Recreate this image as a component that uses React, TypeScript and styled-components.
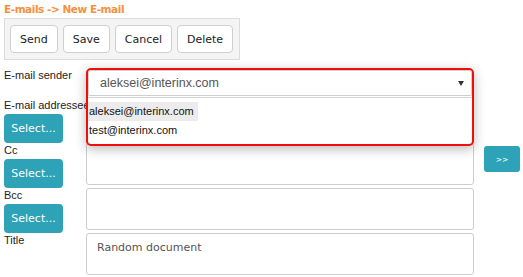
import React from "react";
import styled, { createGlobalStyle } from "styled-components";

const GlobalStyle = createGlobalStyle`
  html, body { margin: 0; padding: 0; background: #fff; }
  body { font-family: "Liberation Sans", Arial, sans-serif; }
  * { box-sizing: border-box; }
`;

const Page = styled.div`
  padding: 2px 4px 0 4px;
  width: 523px;
  height: 277px;
  overflow: hidden;
`;

const Breadcrumb = styled.div`
  font-family: "DejaVu Sans", Verdana, sans-serif;
  font-size: 10.5px;
  font-weight: bold;
  letter-spacing: -0.45px;
  line-height: 14px;
  color: #f4913f;
  margin-bottom: 2px;
  white-space: nowrap;
`;

const Toolbar = styled.div`
  display: inline-flex;
  gap: 5px;
  padding: 6px 6px 6px 5px;
  background: #f4f4f4;
  border: 1px solid #dcdcdc;
`;

const ToolButton = styled.button`
  height: 28px;
  padding: 0 9px;
  background: #fff;
  border: 1px solid #cfcfcf;
  border-radius: 4px;
  font-family: "DejaVu Sans", Verdana, sans-serif;
  font-size: 11px;
  color: #222;
  cursor: pointer;
`;

const Form = styled.div`
  margin-top: 8px;
  display: grid;
  grid-template-columns: 82px 388px 46px;
  grid-template-rows: 30px 45px 45px 45px 45px;
  align-items: start;
`;

const LabelCell = styled.div<{ $row: number }>`
  grid-column: 1;
  grid-row: ${(p) => p.$row};
  display: flex;
  flex-direction: column;
  align-items: flex-start;
`;

const Label = styled.label`
  font-size: 11px;
  line-height: 15px;
  color: #222;
  white-space: nowrap;
  margin-bottom: 1px;
`;

const SelectButton = styled.button`
  height: 29px;
  width: 59px;
  padding: 0;
  border: none;
  border-radius: 4px;
  background: #2ea2b6;
  color: #fff;
  font-family: "DejaVu Sans", Verdana, sans-serif;
  font-size: 11px;
  cursor: pointer;
`;

const FieldCell = styled.div<{ $row: number }>`
  grid-column: 2;
  grid-row: ${(p) => p.$row};
  position: relative;
`;

const TextBox = styled.textarea`
  display: block;
  width: 388px;
  height: 42px;
  margin: 0;
  padding: 7px 10px;
  border: 1px solid #cdcdcd;
  border-radius: 3px;
  resize: none;
  font-family: "DejaVu Sans", Verdana, sans-serif;
  font-size: 11px;
  line-height: 14px;
  color: #555;
  background: #fff;
  outline: none;
`;

const SelectSlot = styled.div`
  height: 30px;
`;

const FocusRing = styled.div`
  position: absolute;
  top: 0;
  left: 0;
  width: 388px;
  z-index: 5;
  border: 2px solid #f20d0d;
  border-radius: 5px;
  background: #fff;
  box-shadow: 0 3px 12px rgba(0, 0, 0, 0.28);
  overflow: hidden;
`;

const SelectHead = styled.div`
  height: 26px;
  display: flex;
  align-items: center;
  justify-content: space-between;
  padding: 0 7px 0 11px;
  border: 1px solid #cfcfcf;
  border-radius: 3px 3px 0 0;
  font-size: 12.5px;
  color: #555;
`;

const Caret = styled.span`
  width: 0;
  height: 0;
  border-left: 3.5px solid transparent;
  border-right: 3.5px solid transparent;
  border-top: 5px solid #333;
`;

const OptionList = styled.div`
  border-top: 1px solid #d4d4d4;
  margin-top: 1px;
  padding: 4px 0 4px;
`;

const Option = styled.div<{ $active?: boolean }>`
  width: fit-content;
  height: 19px;
  line-height: 19px;
  padding: 0 4px 0 1px;
  font-size: 11px;
  color: #111;
  background: ${(p) => (p.$active ? "#ececec" : "transparent")};
`;

const MoveButton = styled.button`
  grid-column: 3;
  grid-row: 3;
  justify-self: end;
  margin-top: 3px;
  width: 36px;
  height: 26px;
  padding: 0;
  border: none;
  border-radius: 3px;
  background: #2ea2b6;
  color: #fff;
  font-family: "DejaVu Sans", Verdana, sans-serif;
  font-size: 7.5px;
  cursor: pointer;
`;

const recipientRows = [
  { label: "E-mail addressee", value: "" },
  { label: "Cc", value: "" },
  { label: "Bcc", value: "" },
];

export default function App() {
  return (
    <Page>
      <GlobalStyle />
      <Breadcrumb>E-mails -&gt; New E-mail</Breadcrumb>
      <Toolbar>
        <ToolButton>Send</ToolButton>
        <ToolButton>Save</ToolButton>
        <ToolButton>Cancel</ToolButton>
        <ToolButton>Delete</ToolButton>
      </Toolbar>
      <Form>
        <LabelCell $row={1}>
          <Label>E-mail sender</Label>
        </LabelCell>
        <FieldCell $row={1}>
          <SelectSlot />
          <FocusRing>
            <SelectHead>
              <span>aleksei@interinx.com</span>
              <Caret />
            </SelectHead>
            <OptionList>
              <Option $active>aleksei@interinx.com</Option>
              <Option>test@interinx.com</Option>
            </OptionList>
          </FocusRing>
        </FieldCell>

        {recipientRows.map((r, i) => (
          <React.Fragment key={r.label}>
            <LabelCell $row={i + 2}>
              <Label>{r.label}</Label>
              <SelectButton>Select...</SelectButton>
            </LabelCell>
            <FieldCell $row={i + 2}>
              <TextBox defaultValue={r.value} />
            </FieldCell>
          </React.Fragment>
        ))}

        <MoveButton>&gt;&gt;</MoveButton>

        <LabelCell $row={5}>
          <Label>Title</Label>
        </LabelCell>
        <FieldCell $row={5}>
          <TextBox defaultValue="Random document" />
        </FieldCell>
      </Form>
    </Page>
  );
}
